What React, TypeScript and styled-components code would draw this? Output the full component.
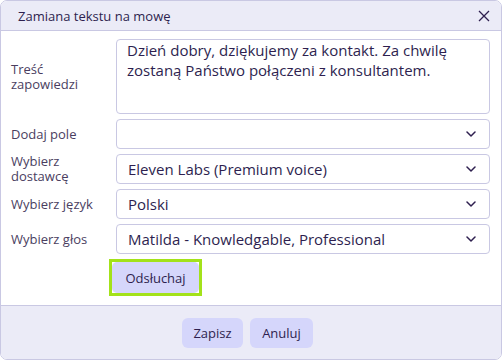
import React from "react";
import styled, { createGlobalStyle } from "styled-components";

const Global = createGlobalStyle`
  html, body { margin: 0; padding: 0; background: #ffffff; }
  body { font-family: "Open Sans", "Noto Sans", sans-serif; color: #2e1f4f; }
  * { box-sizing: border-box; }
`;

const Dialog = styled.div`
  width: 502px;
  height: 360px;
  border: 1px solid #c9c8e3;
  border-radius: 7px;
  overflow: hidden;
  display: flex;
  flex-direction: column;
  background: #ffffff;
`;

const Header = styled.div`
  height: 30px;
  flex: none;
  background: #ebebf7;
  border-bottom: 1px solid #c9c8e3;
  display: flex;
  align-items: center;
  justify-content: space-between;
  padding: 0 10px 0 17px;
`;

const Title = styled.div`
  font-size: 13px;
  color: #2e1f4f;
`;

const CloseButton = styled.button`
  border: none;
  background: transparent;
  padding: 0;
  width: 14px;
  height: 14px;
  display: flex;
  align-items: center;
  justify-content: center;
  color: #2e1f4f;
  cursor: pointer;
`;

const Body = styled.div`
  flex: 1;
  padding: 8px 11px 0 10px;
  display: flex;
  flex-direction: column;
  gap: 5px;
`;

const Row = styled.div`
  display: grid;
  grid-template-columns: 105px 1fr;
  align-items: center;
`;

const Label = styled.label<{ $w?: number }>`
  font-size: 13px;
  line-height: 15px;
  color: #4a3e5f;
  max-width: ${(p) => p.$w ?? 100}px;
`;

const TextArea = styled.div`
  height: 75px;
  border: 1px solid #c9c8e3;
  border-radius: 4px;
  padding: 0 10px;
  font-size: 15px;
  line-height: 20px;
  color: #2e1f4f;
`;

const Select = styled.div`
  height: 30px;
  border: 1px solid #c9c8e3;
  border-radius: 4px;
  display: flex;
  align-items: center;
  justify-content: space-between;
  padding: 0 13px 0 11px;
  font-size: 15px;
  color: #2e1f4f;
`;

const ListenWrap = styled.div`
  padding-left: 98px;
  padding-top: 0px;
`;

const ListenButton = styled.button`
  height: 37px;
  width: 93px;
  border: 3px solid #a3e21a;
  background: #ffffff;
  padding: 0;
  display: flex;
  align-items: stretch;
  cursor: pointer;
`;

const ListenInner = styled.span`
  flex: 1;
  background: #d5d6fb;
  border-radius: 5px;
  display: flex;
  align-items: center;
  justify-content: center;
  font-family: "Open Sans", sans-serif;
  font-size: 13px;
  color: #2e1f4f;
`;

const Footer = styled.div`
  height: 54px;
  flex: none;
  background: #ebebf7;
  border-top: 1px solid #c9c8e3;
  display: flex;
  align-items: center;
  justify-content: center;
  gap: 7px;
  padding-right: 7px;
`;

const FooterButton = styled.button<{ $w: number }>`
  width: ${(p) => p.$w}px;
  height: 30px;
  border: none;
  border-radius: 6px;
  background: #d5d6fb;
  font-family: "Open Sans", sans-serif;
  font-size: 13px;
  color: #2e1f4f;
  cursor: pointer;
`;

const Chevron = () => (
  <svg width="10" height="6" viewBox="0 0 10 6" fill="none">
    <path d="M1 1l4 4 4-4" stroke="#2e1f4f" strokeWidth="1.5" strokeLinecap="round" strokeLinejoin="round" />
  </svg>
);

const fields: { label: string; value: string; w?: number }[] = [
  { label: "Dodaj pole", value: "" },
  { label: "Wybierz dostawcę", value: "Eleven Labs (Premium voice)", w: 90 },
  { label: "Wybierz język", value: "Polski", w: 104 },
  { label: "Wybierz głos", value: "Matilda - Knowledgable, Professional" },
];

export default function App() {
  return (
    <>
      <Global />
      <Dialog>
        <Header>
          <Title>Zamiana tekstu na mowę</Title>
          <CloseButton aria-label="Zamknij">
            <svg width="12" height="12" viewBox="0 0 12 12">
              <path d="M1 1l10 10M11 1L1 11" stroke="#2e1f4f" strokeWidth="1.3" />
            </svg>
          </CloseButton>
        </Header>
        <Body>
          <Row>
            <Label $w={80}>Treść zapowiedzi</Label>
            <TextArea>
              Dzień dobry, dziękujemy za kontakt. Za chwilę zostaną Państwo połączeni z konsultantem.
            </TextArea>
          </Row>
          {fields.map((f) => (
            <Row key={f.label}>
              <Label $w={f.w}>{f.label}</Label>
              <Select>
                <span>{f.value}</span>
                <Chevron />
              </Select>
            </Row>
          ))}
          <ListenWrap>
            <ListenButton>
              <ListenInner>Odsłuchaj</ListenInner>
            </ListenButton>
          </ListenWrap>
        </Body>
        <Footer>
          <FooterButton $w={61}>Zapisz</FooterButton>
          <FooterButton $w={63}>Anuluj</FooterButton>
        </Footer>
      </Dialog>
    </>
  );
}
